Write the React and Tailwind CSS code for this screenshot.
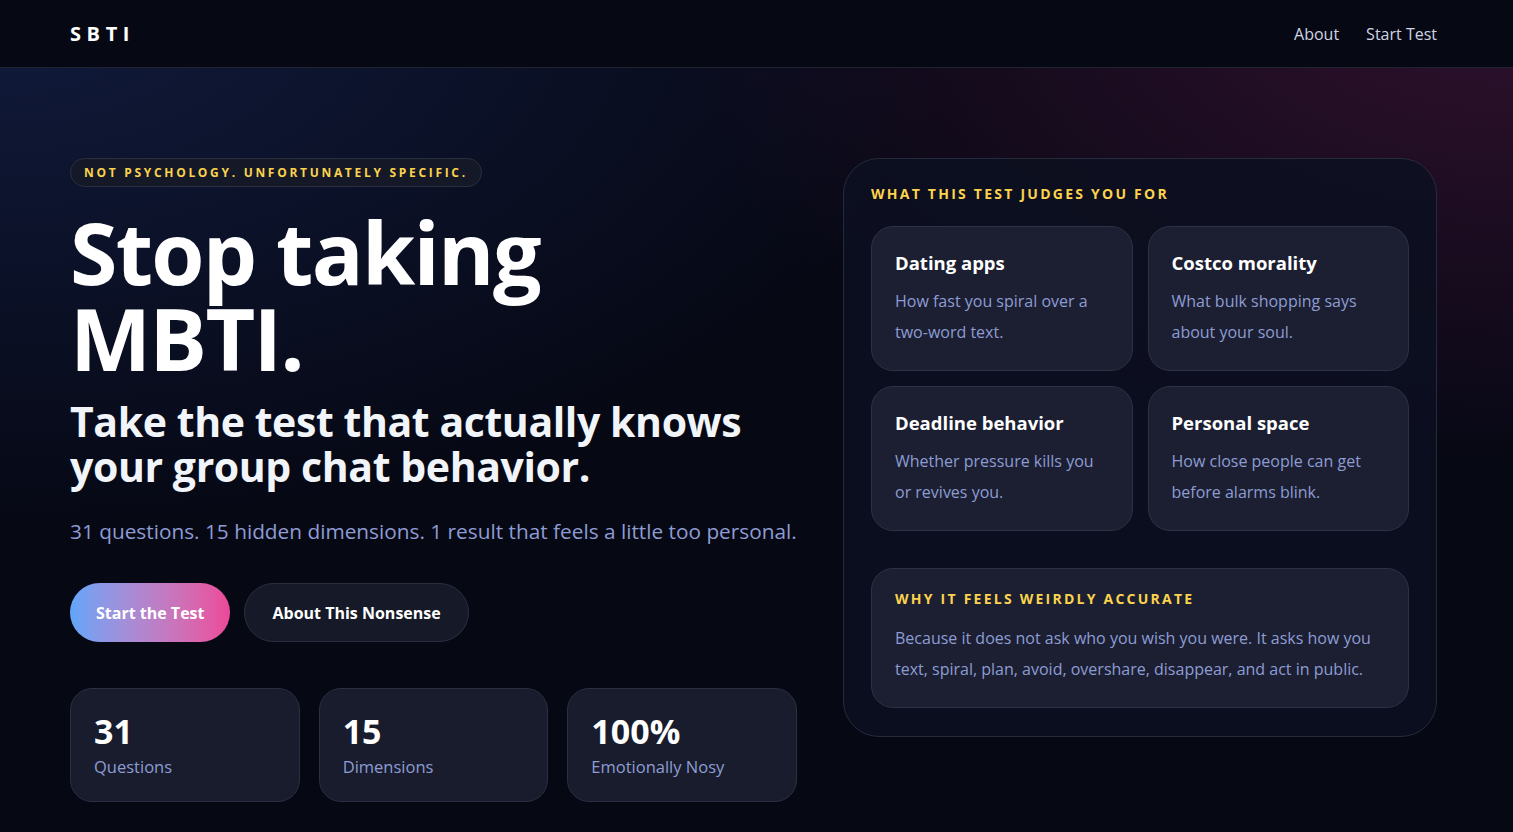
import React from 'react';

const judges = [
  { title: 'Dating apps', text: 'How fast you spiral over a two-word text.' },
  { title: 'Costco morality', text: 'What bulk shopping says about your soul.' },
  { title: 'Deadline behavior', text: 'Whether pressure kills you or revives you.' },
  { title: 'Personal space', text: 'How close people can get before alarms blink.' },
];

const stats = [
  { value: '31', label: 'Questions' },
  { value: '15', label: 'Dimensions' },
  { value: '100%', label: 'Emotionally Nosy' },
];

export default function App() {
  return (
    <div
      className="min-h-screen bg-[#060814] text-white antialiased"
      style={{ fontFamily: '"Open Sans", "Noto Sans", sans-serif' }}
    >
      <div className="min-h-screen bg-[radial-gradient(ellipse_at_0%_0%,rgba(30,50,110,0.45),transparent_45%),radial-gradient(ellipse_at_100%_0%,rgba(90,25,70,0.5),transparent_40%)]">
        {/* top bar */}
        <header className="h-[68px] border-b border-[#1f2333] bg-[#060814]">
          <div className="flex h-full items-center justify-between pl-[70px] pr-[76px]">
            <div className="text-[20px] font-bold tracking-[0.28em] text-white">SBTI</div>
            <nav className="flex items-center gap-[27px] text-[16px] text-[#cfd5e3]">
              <a href="#about">About</a>
              <a href="#start">Start Test</a>
            </nav>
          </div>
        </header>

        <main className="flex justify-between pl-[70px] pr-[76px] pt-[90px] pb-[28px]">
          {/* left column */}
          <section className="w-[727px]">
            <span className="inline-flex h-[29px] items-center rounded-full border border-[#2a2f40] bg-[#141827] px-[13px] text-[12px] font-bold tracking-[0.225em] text-[#fcd34d]">
              NOT PSYCHOLOGY. UNFORTUNATELY SPECIFIC.
            </span>
            <h1 className="mt-[22px] text-[86px] font-bold leading-[1] tracking-[-0.02em] text-white">
              Stop taking
              <br />
              MBTI.
            </h1>
            <h2 className="mt-[18px] text-[41px] font-bold leading-[1.1] tracking-[-0.01em] text-[#f1f5f9]">
              Take the test that actually knows
              <br />
              your group chat behavior.
            </h2>
            <p className="mt-[27px] whitespace-nowrap text-[20.8px] text-[#8e9cd4]">
              31 questions. 15 hidden dimensions. 1 result that feels a little too personal.
            </p>
            <div className="mt-[36px] flex gap-[14px]">
              <button className="h-[59px] rounded-full bg-gradient-to-r from-[#60a5fa] to-[#ec4899] px-[26px] text-[16px] font-bold text-white">
                Start the Test
              </button>
              <button className="h-[59px] rounded-full border border-[#2a2f40] bg-[#151928] px-[27px] text-[16px] font-bold text-white">
                About This Nonsense
              </button>
            </div>
            <div className="mt-[46px] grid grid-cols-3 gap-[19px]">
              {stats.map((s) => (
                <div
                  key={s.label}
                  className="h-[114px] rounded-[22px] border border-[#2a2f42] bg-[#181c2c] px-[23px] pt-[22px]"
                >
                  <div className="text-[34px] font-bold leading-[1.2] text-white">{s.value}</div>
                  <div className="mt-[3px] text-[16.5px] text-[#8e9cd4]">{s.label}</div>
                </div>
              ))}
            </div>
          </section>

          {/* right card */}
          <aside className="h-[579px] w-[594px] rounded-[36px] border border-[#262b3c] bg-[#0c1020]/90 px-[27px] pt-[25px]">
            <h3 className="text-[14px] font-bold leading-[20px] tracking-[0.16em] text-[#fcd34d]">
              WHAT THIS TEST JUDGES YOU FOR
            </h3>
            <div className="mt-[22px] grid grid-cols-2 gap-[15px]">
              {judges.map((j) => (
                <div
                  key={j.title}
                  className="h-[145px] rounded-[22px] border border-[#2c3146] bg-[#1b1f31] px-[23px] pt-[22px]"
                >
                  <div className="text-[18.5px] font-bold text-white">{j.title}</div>
                  <p className="mt-[9px] text-[16px] leading-[31px] text-[#8e9cd4]">{j.text}</p>
                </div>
              ))}
            </div>
            <div className="mt-[37px] h-[140px] rounded-[22px] border border-[#2c3146] bg-[#1b1f31] px-[23px] pt-[20px]">
              <div className="text-[14px] font-bold leading-[20px] tracking-[0.16em] text-[#fcd34d]">
                WHY IT FEELS WEIRDLY ACCURATE
              </div>
              <p className="mt-[14px] text-[16px] leading-[31px] text-[#8e9cd4]">
                Because it does not ask who you wish you were. It asks how you text, spiral, plan, avoid,
                overshare, disappear, and act in public.
              </p>
            </div>
          </aside>
        </main>
      </div>
    </div>
  );
}
